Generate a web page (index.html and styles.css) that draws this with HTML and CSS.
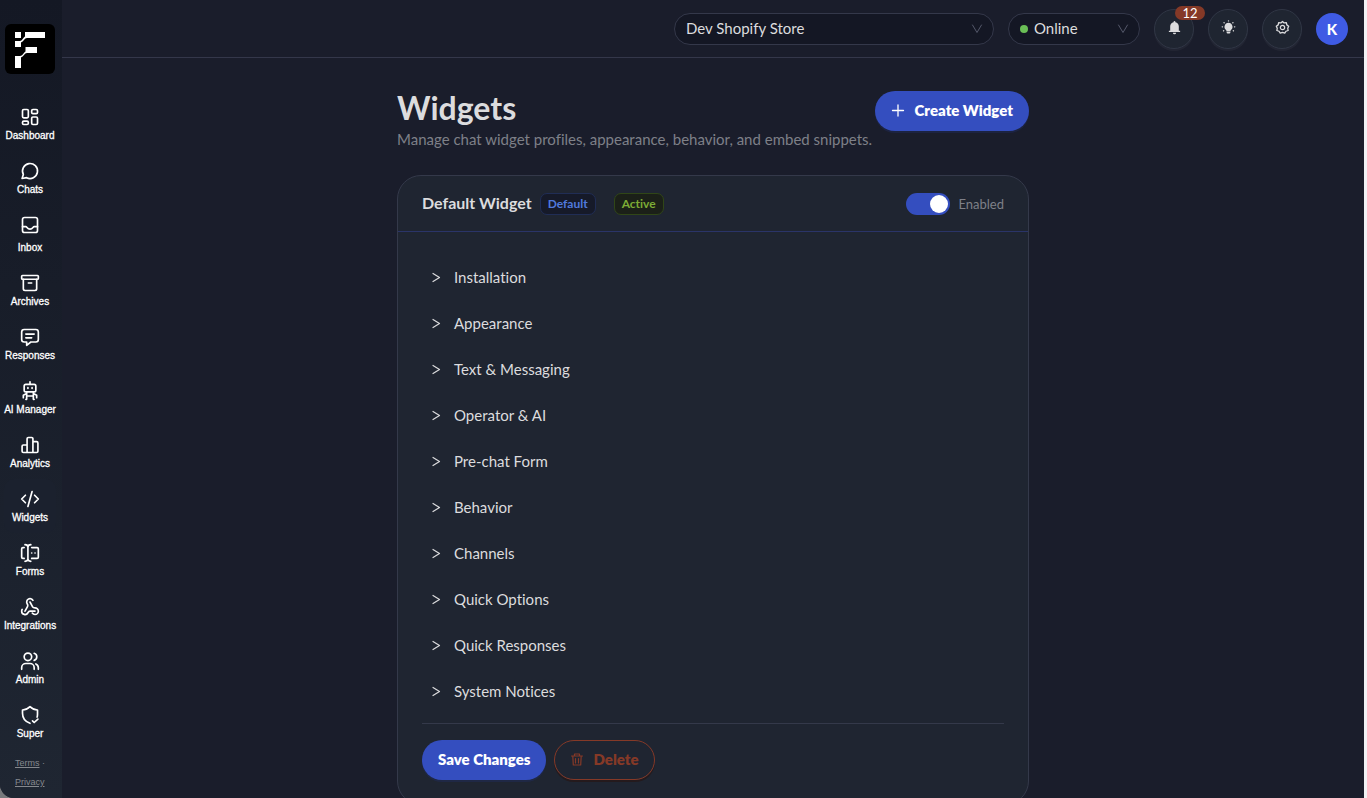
FILE: index.html
```html
<!DOCTYPE html>
<html lang="en">
<head>
    <meta charset="UTF-8">
    <meta name="viewport" content="width=device-width, initial-scale=1.0">
    <title>Widgets</title>
    <link rel="stylesheet" href="styles.css">
</head>
<body>
    <div class="app">
        <aside class="sidebar">
            <a href="#" class="logo" aria-label="Home">
                <svg viewBox="0 0 50 50">
                    <path d="M10 8h6v6h-6zM20 8h20v6H22c-2.500 0-3.500 3.500-6 4.500V23h-6v-6h5c2 0 3-3 5-4.500z"/>
                    <path d="M20.500 23H32v6H22c-2.500 0-3.500 3.500-6 4.500V44h-6V32h5c2.500 0 3.500-3 5.500-4.500z"/>
                </svg>
            </a>

            <nav class="nav">
                <a href="#" class="nav-item">
                    <svg class="icon" viewBox="0 0 24 24"><rect x="3" y="3" width="7" height="10" rx="1.500"/><rect x="14" y="3" width="7" height="5" rx="1.500"/><rect x="3" y="17" width="7" height="4" rx="1.500"/><rect x="14" y="12" width="7" height="9" rx="1.500"/></svg>
                    <span>Dashboard</span>
                </a>
                <a href="#" class="nav-item">
                    <svg class="icon" viewBox="0 0 24 24"><path d="M7.900 20A9 9 0 1 0 4 16.100L2.500 21z"/></svg>
                    <span>Chats</span>
                </a>
                <a href="#" class="nav-item nav-item-inbox">
                    <svg class="icon" viewBox="0 0 24 24"><rect x="3" y="3" width="18" height="18" rx="2.500"/><path d="M3 14h4c1.500 0 1.500 3 5 3s3.500-3 5-3h4"/></svg>
                    <span>Inbox</span>
                </a>
                <a href="#" class="nav-item">
                    <svg class="icon" viewBox="0 0 24 24"><rect x="2" y="3" width="20" height="4.500" rx="1"/><path d="M4 7.500V19a2 2 0 0 0 2 2h12a2 2 0 0 0 2-2V7.500M10 12h4"/></svg>
                    <span>Archives</span>
                </a>
                <a href="#" class="nav-item">
                    <svg class="icon" viewBox="0 0 24 24"><path d="M5 3h14a3 3 0 0 1 3 3v9a3 3 0 0 1-3 3h-6l-5 4v-4H5a3 3 0 0 1-3-3V6a3 3 0 0 1 3-3zM7 8.500h10M7 13h7"/></svg>
                    <span>Responses</span>
                </a>
                <a href="#" class="nav-item">
                    <svg class="icon" viewBox="0 0 24 24"><path d="M12 1v3"/><rect x="5" y="4" width="14" height="9" rx="2"/><path d="M9.500 8v1M14.500 8v1M8 13v9h-1M16 13v9h1M8 18h8M4 20v-3l4-2M20 20v-3l-4-2"/></svg>
                    <span>AI Manager</span>
                </a>
                <a href="#" class="nav-item">
                    <svg class="icon" viewBox="0 0 24 24"><path d="M8.500 21V4.500a1.500 1.500 0 0 1 1.500-1.500h4a1.500 1.500 0 0 1 1.500 1.500V21M8.500 12H4a1.500 1.500 0 0 0-1.500 1.500v6A1.500 1.500 0 0 0 4 21h16a1.500 1.500 0 0 0 1.500-1.500v-10A1.500 1.500 0 0 0 20 8h-4.500"/></svg>
                    <span>Analytics</span>
                </a>
                <a href="#" class="nav-item active" aria-current="page">
                    <svg class="icon" viewBox="0 0 24 24"><path d="M6.500 7.500 2 12l4.500 4.500M17.500 7.500 22 12l-4.500 4.500M14.500 3l-5 18"/></svg>
                    <span>Widgets</span>
                </a>
                <a href="#" class="nav-item">
                    <svg class="icon" viewBox="0 0 24 24"><path d="M6 2c2 0 3.500 1 3.500 3v14c0 2-1.500 3-3.500 3M13 2c-2 0-3.500 1-3.500 3M13 22c-2 0-3.500-1-3.500-3M5 5.500H3.500A1.500 1.500 0 0 0 2 7v10a1.500 1.500 0 0 0 1.500 1.500H5M14 5.500h6.500A1.500 1.500 0 0 1 22 7v10a1.500 1.500 0 0 1-1.500 1.500H14M14 12h.1M18 12h.1"/></svg>
                    <span>Forms</span>
                </a>
                <a href="#" class="nav-item">
                    <svg class="icon" viewBox="0 0 24 24"><path d="M18 16.980h-5.990c-1.100 0-1.950.940-2.480 1.900A4 4 0 0 1 2 17c.010-.700.200-1.400.570-2M6 17l3.130-5.780c.530-.970.100-2.180-.500-3.100a4 4 0 1 1 6.890-4.060M12 6l3.130 5.730C15.660 12.700 16.900 13 18 13a4 4 0 0 1 0 8 4 4 0 0 1-3.300-1.700"/></svg>
                    <span>Integrations</span>
                </a>
                <a href="#" class="nav-item">
                    <svg class="icon" viewBox="0 0 24 24"><circle cx="9.500" cy="7" r="4.500"/><path d="M2 22v-2a5 5 0 0 1 5-5h5a5 5 0 0 1 5 5v2M17 2.700a4.500 4.500 0 0 1 0 8.600M19 15.500a5 5 0 0 1 3 4.500v2"/></svg>
                    <span>Admin</span>
                </a>
                <a href="#" class="nav-item">
                    <svg class="icon" viewBox="0 0 24 24"><path d="M12 22c-6-2-9-6-9-12V6c4 0 6.500-1.500 9-4 2.500 2.500 5 4 9 4v5c0 1.500 0 2.500-.500 3.500M15 19l2 2 4.500-4"/></svg>
                    <span>Super</span>
                </a>
            </nav>

            <div class="legal"><a href="#">Terms</a> · <a href="#">Privacy</a></div>
        </aside>

        <div class="content">
            <header class="topbar">
                <div class="select-box store">
                    <select aria-label="Store">
                        <option>Dev Shopify Store</option>
                    </select>
                    <svg class="caret" viewBox="0 0 12 12"><path d="M1.500 2L6 9.500 10.500 2"/></svg>
                </div>
                <div class="select-box status">
                    <span class="dot"></span>
                    <select aria-label="Status">
                        <option>Online</option>
                        <option>Away</option>
                    </select>
                    <svg class="caret" viewBox="0 0 12 12"><path d="M1.500 2L6 9.500 10.500 2"/></svg>
                </div>
                <button type="button" class="round-btn" aria-label="Notifications">
                    <svg viewBox="0 0 16 16"><path class="fill" d="M8 1c.6 0 1 .4 1 1v.5c2.200.500 3.600 2.300 3.600 4.500V11.500H14v1.300H2v-1.300h1.400V7c0-2.200 1.400-4 3.600-4.500V2c0-.6.4-1 1-1zM6.300 13.500h3.400a1.700 1.700 0 0 1-3.400 0z"/></svg>
                    <span class="count">12</span>
                </button>
                <button type="button" class="round-btn" aria-label="Theme">
                    <svg viewBox="0 0 16 16"><path class="fill" d="M8 3a4.300 4.300 0 0 1 2.300 7.900v1H5.700v-1A4.300 4.300 0 0 1 8 3zM6 12.600h4v.7a1.200 1.200 0 0 1-1.200 1.200H7.200A1.200 1.200 0 0 1 6 13.300z"/><path stroke-width="1.400" d="M8 .9v.1M3.200 2.800l.2.200M12.800 2.800l-.2.200M1.300 7.300h.3M14.400 7.300h.3M2.700 11.600l.2-.1M13.300 11.600l-.2-.1"/></svg>
                </button>
                <button type="button" class="round-btn" aria-label="Settings">
                    <svg viewBox="0 0 16 16"><path stroke-width="1.400" d="M8 1.500l1.700 1.600 2.400-.3.500 2.400 2 1.400L13.600 8.800l.4 2.400-2.300.8L10.400 14 8 13.200 5.600 14l-1.300-2-2.300-.8.400-2.400L1.400 6.600l2-1.400.5-2.400 2.400.3z"/><circle stroke-width="1.300" cx="8" cy="8" r="2.300"/></svg>
                </button>
                <button type="button" class="avatar">K</button>
            </header>

            <main class="page">
                <div class="page-head">
                    <div>
                        <h1>Widgets</h1>
                        <p>Manage chat widget profiles, appearance, behavior, and embed snippets.</p>
                    </div>
                    <button type="button" class="btn btn-primary">
                        <svg viewBox="0 0 14 14"><path stroke-width="1.300" d="M7 2v11M1.500 7.500h11"/></svg>
                        Create Widget
                    </button>
                </div>

                <section class="card">
                    <div class="card-head">
                        <h2>Default Widget</h2>
                        <span class="tag tag-blue">Default</span>
                        <span class="tag tag-green">Active</span>
                        <label class="switch">
                            <input type="checkbox" checked>
                            <span>Enabled</span>
                        </label>
                    </div>

                    <div class="card-body">
                        <details><summary><svg viewBox="0 0 12 12"><path d="M3 2.500L9.500 6.500 3 10.500"/></svg>Installation</summary></details>
                        <details><summary><svg viewBox="0 0 12 12"><path d="M3 2.500L9.500 6.500 3 10.500"/></svg>Appearance</summary></details>
                        <details><summary><svg viewBox="0 0 12 12"><path d="M3 2.500L9.500 6.500 3 10.500"/></svg>Text &amp; Messaging</summary></details>
                        <details><summary><svg viewBox="0 0 12 12"><path d="M3 2.500L9.500 6.500 3 10.500"/></svg>Operator &amp; AI</summary></details>
                        <details><summary><svg viewBox="0 0 12 12"><path d="M3 2.500L9.500 6.500 3 10.500"/></svg>Pre-chat Form</summary></details>
                        <details><summary><svg viewBox="0 0 12 12"><path d="M3 2.500L9.500 6.500 3 10.500"/></svg>Behavior</summary></details>
                        <details><summary><svg viewBox="0 0 12 12"><path d="M3 2.500L9.500 6.500 3 10.500"/></svg>Channels</summary></details>
                        <details><summary><svg viewBox="0 0 12 12"><path d="M3 2.500L9.500 6.500 3 10.500"/></svg>Quick Options</summary></details>
                        <details><summary><svg viewBox="0 0 12 12"><path d="M3 2.500L9.500 6.500 3 10.500"/></svg>Quick Responses</summary></details>
                        <details><summary><svg viewBox="0 0 12 12"><path d="M3 2.500L9.500 6.500 3 10.500"/></svg>System Notices</summary></details>

                        <div class="actions">
                            <button type="button" class="btn btn-primary">Save Changes</button>
                            <button type="button" class="btn btn-danger">
                                <svg viewBox="0 0 14 14"><path stroke-width="1.200" d="M1.500 4h11M4.500 4V2h5v2M2.800 4l.5 9h7.400l.5-9M5.500 6.500V11M8.500 6.500V11"/></svg>
                                Delete
                            </button>
                        </div>
                    </div>
                </section>
            </main>
        </div>
    </div>
</body>
</html>
```

FILE: styles.css
```css
* {
    margin: 0;
    padding: 0;
    box-sizing: border-box;
}

body {
    font-family: Avenir, Lato, sans-serif;
    font-size: 15px;
    line-height: 22px;
    font-variant-ligatures: none;
    color: #dcdcde;
    background: #77797c;
    border-right: 3px solid #f1f2f4;
    overflow: hidden;
}

button,
select {
    font: inherit;
    color: inherit;
    cursor: pointer;
}

svg {
    fill: none;
    stroke: currentColor;
    stroke-linecap: round;
    stroke-linejoin: round;
}

.fill {
    fill: currentColor;
    stroke: none;
}

.app {
    display: flex;
    height: 100vh;
    background: #1a1d2b;
    border-bottom-left-radius: 14px;
    overflow: hidden;
}

/* Sidebar */
.sidebar {
    width: 62px;
    flex-shrink: 0;
    padding: 24px 2px 0 0;
    display: flex;
    flex-direction: column;
    align-items: center;
    background: linear-gradient(#141824, #1f2632);
    font-family: Helvetica, "Liberation Sans", sans-serif;
}

.logo {
    width: 50px;
    height: 50px;
    margin-bottom: 23px;
    background: #000000;
    border-radius: 6px;
}

.logo svg {
    display: block;
    fill: #ffffff;
    stroke: none;
}

.nav {
    width: 100%;
}

.nav-item {
    display: flex;
    flex-direction: column;
    align-items: center;
    gap: 3px;
    margin: 0 4px;
    padding: 10px 0 9px;
    border-radius: 10px;
    color: #ffffff;
    font-size: 10px;
    line-height: 12px;
    text-decoration: none;
    white-space: nowrap;
    -webkit-text-stroke: 0.3px #ffffff;
}

.nav-item-inbox {
    gap: 7px;
}

.nav-item.active {
    background: #1b212e;
}

.icon {
    width: 20px;
    height: 20px;
    stroke-width: 2;
}

.legal {
    width: 30px;
    margin-top: 5px;
    font-size: 9px;
    line-height: 19px;
    color: #85888e;
}

.legal a {
    color: inherit;
}

/* Top bar */
.content {
    flex: 1;
    min-width: 0;
}

.topbar {
    display: flex;
    align-items: center;
    justify-content: flex-end;
    gap: 14px;
    height: 58px;
    padding: 0 16px;
    border-bottom: 1px solid #34374a;
}

.select-box {
    position: relative;
    display: flex;
    align-items: center;
    height: 32px;
    background: #141724;
    border: 1px solid #34384a;
    border-radius: 16px;
}

.select-box select {
    flex: 1;
    height: 30px;
    padding: 0 32px 2px 11px;
    background: transparent;
    border: none;
    border-radius: 16px;
    appearance: none;
    outline: none;
}

.store {
    width: 320px;
}

.status {
    width: 132px;
}

.status select {
    padding-left: 6px;
}

.dot {
    width: 8px;
    height: 8px;
    margin-left: 11px;
    background: #6abe56;
    border-radius: 50%;
}

.caret {
    position: absolute;
    right: 10px;
    width: 12px;
    height: 12px;
    color: #54586a;
    pointer-events: none;
}

.round-btn {
    position: relative;
    display: flex;
    align-items: center;
    justify-content: center;
    width: 40px;
    height: 40px;
    padding-bottom: 3px;
    background: #1f2531;
    border: 1px solid #303645;
    border-radius: 50%;
    box-shadow: 0 2px 0 rgba(255, 255, 255, 0.04);
}

.round-btn svg {
    width: 15px;
    height: 15px;
}

.count {
    position: absolute;
    top: -4px;
    right: -12px;
    width: 30px;
    height: 14px;
    background: #853927;
    border-radius: 7px;
    color: #ffffff;
    font-size: 13px;
    line-height: 14px;
}

.avatar {
    width: 32px;
    height: 32px;
    background: #3f5be4;
    border: none;
    border-radius: 50%;
    color: #ffffff;
    font-weight: 900;
}

/* Page */
.page {
    width: 100%;
    max-width: 680px;
    margin: 0 auto;
    padding: 30px 24px;
}

.page-head {
    display: flex;
    justify-content: space-between;
    align-items: flex-start;
    margin-bottom: 25px;
}

h1 {
    font-size: 32px;
    line-height: 40px;
}

.page-head p {
    color: #7e8088;
    white-space: nowrap;
}

.page-head .btn {
    margin-top: 3px;
}

.btn {
    display: flex;
    align-items: center;
    gap: 9px;
    height: 40px;
    padding: 0 15px 2px;
    border: 1px solid transparent;
    border-radius: 20px;
    font-weight: 800;
    white-space: nowrap;
}

.btn svg {
    width: 14px;
    height: 14px;
}

.btn-primary {
    background: #344ebf;
    color: #ffffff;
    box-shadow: 0 2px 0 rgba(32, 45, 100, 0.4);
}

.btn-danger {
    background: transparent;
    border-color: #853927;
    color: #853927;
    box-shadow: 0 2px 0 rgba(40, 20, 16, 0.6);
}

.card {
    background: #1f2531;
    border: 1px solid #34394a;
    border-radius: 24px;
}

.card-head {
    display: flex;
    align-items: center;
    height: 56px;
    padding: 0 24px;
    border-bottom: 1px solid #2a3468;
}

h2 {
    margin-right: 8px;
    padding-bottom: 2px;
    font-size: 16px;
}

.tag {
    margin-right: 18px;
    padding: 0 7px;
    border: 1px solid;
    border-radius: 7px;
    font-size: 12px;
    font-weight: 700;
    line-height: 20px;
}

.tag-blue {
    background: #161a29;
    border-color: #202d55;
    color: #5079dc;
}

.tag-green {
    background: #1b2018;
    border-color: #304617;
    color: #7dab35;
}

.switch {
    display: flex;
    align-items: center;
    gap: 8px;
    margin-left: auto;
    color: #7e8088;
    font-size: 13px;
    cursor: pointer;
}

.switch input {
    display: flex;
    width: 44px;
    height: 22px;
    padding: 2px;
    background: #4a4e5a;
    border-radius: 11px;
    appearance: none;
    cursor: pointer;
}

.switch input::before {
    content: "";
    width: 18px;
    height: 18px;
    background: #ffffff;
    border-radius: 50%;
}

.switch input:checked {
    justify-content: flex-end;
    background: #344ebf;
}

.card-body {
    padding: 22px 24px 24px;
}

summary {
    display: flex;
    align-items: center;
    gap: 12px;
    height: 46px;
    padding: 0 8px;
    list-style: none;
    cursor: pointer;
}

summary svg {
    width: 12px;
    height: 12px;
    stroke-width: 1.2;
}

.actions {
    display: flex;
    gap: 8px;
    margin-top: 9px;
    padding-top: 16px;
    border-top: 1px solid #34394a;
}
```
